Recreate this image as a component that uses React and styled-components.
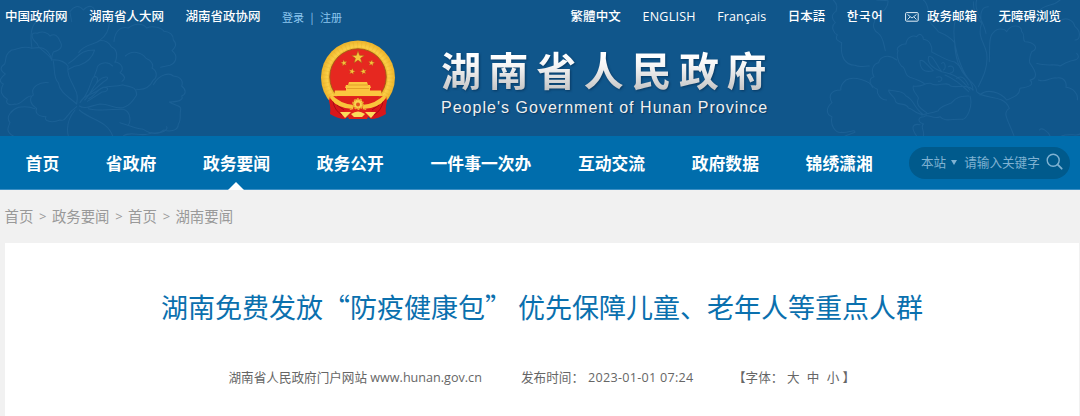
import React from "react";
import styled, { createGlobalStyle } from "styled-components";

const GlobalStyle = createGlobalStyle`
  * {
    box-sizing: border-box;
  }
  body {
    margin: 0;
    background: #f1f1f1;
    font-family: "Open Sans", "Noto Sans CJK SC", sans-serif;
  }
`;

const Page = styled.div`
  width: 1080px;
  height: 416px;
  overflow: hidden;
  display: flex;
  flex-direction: column;
`;

const Header = styled.header`
  position: relative;
  height: 136px;
  background: #10568b;
  color: #fff;
`;

const Flowers = styled.svg`
  position: absolute;
  top: 0;
  left: 0;
  fill: none;
  stroke: #1b6095;
  stroke-width: 3.2;
  stroke-linecap: round;
  stroke-linejoin: round;
`;

const TopBar = styled.div`
  position: relative;
  display: flex;
  justify-content: space-between;
  height: 34px;
  padding: 0 19px 0 5px;
`;

const LinkGroup = styled.div`
  display: flex;
  align-items: center;
  gap: 21.5px;
`;

const TopLink = styled.a`
  font-family: "Open Sans", "Noto Sans CJK ${(props) => props.$region || "SC"}", sans-serif;
  font-size: 12.5px;
  font-weight: ${(props) => props.$weight || 500};
  line-height: 34px;
  letter-spacing: ${(props) => props.$spacing || 0}px;
  white-space: nowrap;
`;

const MailLink = styled(TopLink)`
  display: flex;
  align-items: center;
  gap: 8px;
`;

const Login = styled.span`
  display: flex;
  gap: 6.5px;
  font-family: "Noto Sans CJK SC", sans-serif;
  font-size: 11px;
  line-height: 33px;
  color: #8cc6ef;
`;

const Brand = styled.div`
  position: relative;
  display: flex;
  padding: 6px 0 0 320px;
`;

const BrandText = styled.div`
  display: flex;
  flex-direction: column;
  margin: 3px 0 0 45px;
`;

const SiteName = styled.h1`
  margin: 0;
  font-family: "Noto Sans CJK SC", sans-serif;
  font-size: 40px;
  font-weight: 700;
  line-height: 52px;
  letter-spacing: 7.6px;
  white-space: nowrap;
  color: transparent;
  background: linear-gradient(#fff 25%, #f4f4f4 45%, #c8c8c8 88%);
  background-clip: text;
  filter: drop-shadow(1px 1px 1px rgba(0, 30, 60, 0.5));
`;

const SiteNameEn = styled.span`
  margin-top: 4px;
  font-family: "Liberation Sans", sans-serif;
  font-size: 16px;
  line-height: 18px;
  letter-spacing: 1.02px;
  white-space: nowrap;
  color: #f0f0f0;
  text-shadow: 1px 1px 1px rgba(0, 30, 60, 0.5);
`;

const Nav = styled.nav`
  display: flex;
  align-items: center;
  justify-content: space-between;
  height: 54px;
  padding: 0 10px 0 25.6px;
  background: #006dac;
  border-bottom: 1px solid #3c8fc4;
`;

const NavList = styled.div`
  display: flex;
  gap: 46.7px;
`;

const NavItem = styled.a`
  position: relative;
  padding-top: 1px;
  font-family: "Noto Sans CJK SC", sans-serif;
  font-size: 16.8px;
  font-weight: 700;
  line-height: 52px;
  color: #fff;
  white-space: nowrap;

  &::after {
    content: "";
    display: ${(props) => (props.$active ? "block" : "none")};
    position: absolute;
    left: 50%;
    bottom: -1px;
    margin-left: -8px;
    border: 8px solid transparent;
    border-top: 0;
    border-bottom-color: #fff;
  }
`;

const Search = styled.div`
  display: flex;
  align-items: center;
  justify-content: space-between;
  width: 161px;
  height: 32px;
  padding: 0 7px 2px 12px;
  border-radius: 16px;
  background: #005a8c;
  font-family: "Noto Sans CJK SC", sans-serif;
  font-size: 12.6px;
  color: #7fb2d2;
  white-space: nowrap;
`;

const Caret = styled.i`
  display: inline-block;
  margin: 0 7px 2px 5px;
  border: 3px solid transparent;
  border-top: 5px solid #7fb2d2;
  border-bottom: 0;
`;

const Breadcrumb = styled.div`
  display: flex;
  align-items: center;
  gap: 5.8px;
  height: 53px;
  padding: 0 0 2px 4.5px;
  font-size: 14.4px;
  color: #999;

  & span {
    font-size: 13px;
    width: 7px;
  }
`;

const Article = styled.main`
  display: flex;
  flex-direction: column;
  flex: 1;
  margin: 0 1px 0 5px;
  background: #fff;
`;

const Title = styled.h2`
  margin: 42px 0 0 156px;
  font-family: "Noto Sans CJK SC", sans-serif;
  font-size: 27px;
  font-weight: 400;
  line-height: 44px;
  color: #0a70ae;
  white-space: nowrap;
`;

const Meta = styled.div`
  display: flex;
  margin: 39px 0 0 223.5px;
  font-size: 12.6px;
  line-height: 20px;
  color: #666;
  white-space: pre;
`;

const MetaItem = styled.span`
  width: ${(props) => props.$width}px;
  letter-spacing: ${(props) => props.$spacing || 0}px;
`;

const FontSizes = styled.span`
  display: flex;
  gap: 7.2px;

  & span:first-child {
    margin-right: -3.5px;
  }
  & span:last-child {
    margin-left: -4px;
  }
`;

const languages = [
  { text: "繁體中文", region: "TC", spacing: 0.15 },
  { text: "ENGLISH", spacing: 0.25, weight: 400 },
  { text: "Français", spacing: 0.1, weight: 400 },
  { text: "日本語", region: "JP" },
  { text: "한국어", region: "KR", spacing: 0.7 },
];

const navItems = [
  "首页",
  "省政府",
  "政务要闻",
  "政务公开",
  "一件事一次办",
  "互动交流",
  "政府数据",
  "锦绣潇湘",
];

const STAR =
  "M0-10 2.4-3.2 9.5-3.1 3.8 1.2 5.9 8.1 0 4-5.9 8.1-3.8 1.2-9.5-3.1-2.4-3.2Z";

const FlowerPattern = () => (
  <Flowers width="1080" height="136" viewBox="0 0 3240 408">
    <path d="M155 180C145 140 120 140 95 145 70 135 50 150 35 150 12 165 20 178 14 192-5 205 5 215 16 222-6 240 0 248 10 252-4 275 8 290 22 298 14 310 30 318 45 312 60 318 75 290 92 288" />
    <path d="M155 178C140 155 115 148 112 132 90 112 92 95 112 100 128 92 145 98 150 108 165 98 175 110 180 124 190 140 182 150 160 156 155 165 155 170 155 180" />
    <path d="M155 180C180 178 195 186 204 198 200 225 215 245 226 270 235 285 232 300 230 312M160 184C165 210 160 235 175 248 178 275 205 290 230 312" />
    <path d="M206 190C235 175 235 150 284 150 275 180 255 190 238 196 220 198 212 205 206 208M236 158C255 130 285 135 298 122 315 120 328 130 334 140 355 150 352 170 345 188" />
    <path d="M96 145C92 120 90 80 110 65M342 125C345 90 365 78 385 84 405 68 430 70 440 84 460 75 485 84 492 94 515 96 520 108 520 120 535 135 522 145 516 152 538 170 525 190 510 196L482 202" />
    <path d="M345 185C365 190 374 205 360 218 378 228 376 238 366 244M376 168C395 150 425 155 438 175 455 182 462 195 456 204 475 215 470 235 460 240 448 265 430 270 410 268" />
    <path d="M240 308C255 280 280 285 296 270 310 255 345 262 368 254 390 262 410 258 410 285 398 305 385 318 372 322 350 330 330 312 300 312 275 316 255 330 238 318" />
    <path d="M460 254C480 220 510 218 520 228 545 230 550 246 545 258 560 270 558 284 545 288 552 302 532 305 508 306 525 318 545 315 542 330 538 345 545 360 535 372 535 395 505 395 492 390 470 408 445 398 430 388 400 385 375 372 360 368" />
    <path d="M230 320C195 345 200 365 180 360 150 372 130 360 138 350 110 350 105 335 110 325 85 310 90 290 100 285 90 260 120 245 145 248" />
    <path d="M225 330C205 355 198 380 205 408M238 330C270 360 320 360 338 408M265 326C300 335 350 326 370 328 395 335 392 370 384 376M40 408C15 395 25 380 30 368 15 350 35 330 55 322 75 318 90 320 105 326" />
    <path d="M246 300C265 280 270 255 278 235 285 225 298 230 290 248M254 300C275 280 280 250 305 235 325 225 330 235 310 246L270 280M266 296C285 288 290 270 310 262 330 260 325 275 306 276L262 304M290 210C290 190 320 180 338 198M290 210 282 230M210 35C220 20 235 12 250 30 270 10 288 20 284 45M210 38 215 65M298 122C315 110 328 90 328 65" />
    <path d="M370 408C390 390 430 415 455 398 490 402 505 388 500 380" />

    <g transform="translate(2280 0)">
      <path d="M220 0C235 15 230 25 228 34 210 45 218 60 226 68 210 80 222 100 232 105 222 120 240 125 245 128 240 170 255 195 285 196 300 204 320 196 328 198" />
      <path d="M350 0 384 2C386 20 375 25 374 30 350 38 340 55 344 64 335 80 345 95 355 100 370 110 370 130 376 152" />
      <path d="M380 300C360 300 350 280 352 268 325 255 325 235 342 230 330 210 342 190 356 188 360 170 385 160 410 180M424 198C410 180 410 160 414 152 405 145 425 130 438 132 440 110 460 105 470 110 480 95 490 108 490 118" />
      <path d="M424 198C440 202 430 225 450 232 475 240 485 245 495 252M490 118C510 120 518 140 515 156 535 165 555 180 584 186 605 200 610 218 622 232 635 250 640 260 638 270" />
      <path d="M490 0C510 15 500 40 512 50 500 65 520 75 535 95 560 105 575 115 584 128 585 175 600 210 620 232M586 60C575 100 585 170 622 235 640 250 650 260 650 272" />
      <path d="M640 5C640 30 650 55 665 70 650 110 675 130 680 160 685 200 670 230 655 260M650 0C640 30 670 60 678 100M685 20C660 20 660 50 665 70" />
      <path d="M688 185C690 150 685 110 700 98 710 82 735 85 740 95 755 70 785 75 785 95 798 105 785 118 795 125 820 125 840 145 815 155 808 172 808 185 810 190 825 210 838 235 810 240 825 255 805 262 780 265 778 290 755 292 740 300 720 275 680 265 660 285" />
      <path d="M650 275C670 300 730 280 748 325 725 340 745 360 762 408M630 288C640 320 620 360 605 358 580 355 555 368 540 350 520 360 505 340 492 350 475 350 470 365 490 372" />
      <path d="M626 288C600 290 590 290 575 308 550 320 540 320 535 332 515 340 500 340 485 345M640 270C620 250 590 265 572 258 560 240 530 265 512 250 490 248 490 262 460 258 455 275 475 285 475 295 465 320 490 330 500 338" />
      <path d="M500 345C465 345 460 325 445 324 440 305 405 320 405 298 398 285 385 280 386 270 420 275 430 275 438 288 465 300 460 325 492 345" />
      <path d="M338 262C330 240 280 228 258 240 235 260 245 270 242 270 210 270 205 290 216 308 195 325 200 345 216 350 210 375 225 400 245 397 265 400 285 385 285 397L255 408M470 408C450 380 460 370 480 374M490 372C480 380 495 395 490 408" />
      <path d="M480 182C490 175 505 200 520 212 490 220 480 205 480 182M506 170C520 165 525 190 545 215 520 205 500 190 506 170M545 190C555 180 560 205 550 210M565 200C580 192 590 215 570 220M530 232C550 225 550 245 535 244M545 215C580 222 600 230 630 270M555 225C580 235 600 250 626 275M590 235C605 225 615 235 625 255" />
      <path d="M830 190C860 200 890 190 900 198 925 182 930 185 935 182 955 180 960 170 950 160M835 240C860 250 870 230 890 234 915 230 920 250 918 262 940 265 955 280 952 300M840 30C860 10 880 20 900 0M900 62C920 50 940 60 945 80 965 95 960 120 945 120M838 390C845 380 865 395 870 408M905 408C925 398 950 410 960 402" />
    </g>
  </Flowers>
);

const Emblem = () => (
  <svg width="76" height="80" viewBox="0 0 76 80">
    <defs>
      <radialGradient id="gold" cx="50%" cy="50%" r="50%">
        <stop offset="74%" stopColor="#e9a51d" />
        <stop offset="83%" stopColor="#fbd048" />
        <stop offset="100%" stopColor="#edb229" />
      </radialGradient>
    </defs>
    <circle cx="38" cy="37.5" r="37" fill="url(#gold)" />
    <circle cx="38" cy="37.5" r="32.5" fill="none" stroke="#d99a1c" strokeWidth="6" strokeDasharray="1 3" opacity="0.2" />
    <circle cx="38" cy="37" r="28.2" fill="#e62820" stroke="#9c5a16" strokeWidth="0.9" />
    <g fill="#f7c53c" stroke="#a94d14" strokeWidth="0.8">
      <path d={STAR} transform="translate(38 17.5) scale(.68)" />
      <path d={STAR} transform="translate(24 23) rotate(-10) scale(.34)" />
      <path d={STAR} transform="translate(51.5 23) rotate(10) scale(.34)" />
      <path d={STAR} transform="translate(32 31.5) rotate(12) scale(.34)" />
      <path d={STAR} transform="translate(43.5 31.5) rotate(-12) scale(.34)" />
    </g>
    <g fill="#fbc63f">
      <path d="M29 42h18l1 3h2l1 3H25l1-3h2zM26 48h24v3H26zM15 50.5h46l1 5.5H14z" />
      <path d="M28 45h20M27 48.5h22" stroke="#d9901f" strokeWidth="0.7" />
    </g>
    <path d="M11 56Q38 57 65 56L56 69H20Z" fill="#df211c" />
    <path d="M10 56Q14 67 27 67L34 73 25 79Q18 79 10 74 11 69 9 61ZM66 56Q62 67 49 67L42 73 51 79Q58 79 66 74 65 69 67 61Z" fill="#d8161a" />
    <path d="M13 61Q14 70 22 75M63 61Q62 70 54 75M17 65 24 70M59 65 52 70" stroke="#a50d14" fill="none" strokeWidth="1" />
    <path d="M11 54Q20 64 34 65L33 69Q18 69 10 58ZM65 54Q56 64 42 65L43 69Q58 69 66 58Z" fill="#f9c43b" />
    <path d="M25 71 34 69H42L51 71 47 79H29Z" fill="#de201b" />
    <circle cx="38" cy="64" r="4.8" fill="#fbd451" stroke="#e9ab2c" strokeWidth="2.2" strokeDasharray="1.8 1.2" />
    <circle cx="38" cy="64.5" r="2" fill="#e4521f" />
    <path d="M20 72 31 72 25 78ZM56 72 45 72 51 78ZM31 74Q38 69 45 74L42 77H34Z" fill="#fbdc5c" />
  </svg>
);

const MailIcon = () => (
  <svg width="14" height="10" viewBox="0 0 14 10" fill="none" stroke="#e4f0f8">
    <rect x="0.6" y="0.6" width="12.6" height="8.6" rx="1" />
    <path d="M2.5 2.5 7 6 11.5 2.5M2.5 7.5 5 5M11.5 7.5 9 5" strokeWidth="0.9" />
  </svg>
);

const SearchIcon = () => (
  <svg width="17" height="17" viewBox="0 0 17 17" fill="none" stroke="#7fb2d2">
    <circle cx="7.2" cy="7.2" r="6" strokeWidth="1.4" />
    <path d="M11.7 11.7 15.7 15.7" strokeWidth="1.8" strokeLinecap="round" />
  </svg>
);

const App = () => {
  return (
    <Page>
      <GlobalStyle />
      <Header>
        <FlowerPattern />
        <TopBar>
          <LinkGroup>
            <TopLink>中国政府网</TopLink>
            <TopLink>湖南省人大网</TopLink>
            <TopLink>湖南省政协网</TopLink>
            <Login>
              <span>登录</span>
              <span>|</span>
              <span>注册</span>
            </Login>
          </LinkGroup>
          <LinkGroup>
            {languages.map(({ text, region, spacing, weight }) => (
              <TopLink key={text} $region={region} $spacing={spacing} $weight={weight}>
                {text}
              </TopLink>
            ))}
            <MailLink>
              <MailIcon />
              政务邮箱
            </MailLink>
            <TopLink>无障碍浏览</TopLink>
          </LinkGroup>
        </TopBar>
        <Brand>
          <Emblem />
          <BrandText>
            <SiteName>湖南省人民政府</SiteName>
            <SiteNameEn>People's Government of Hunan Province</SiteNameEn>
          </BrandText>
        </Brand>
      </Header>
      <Nav>
        <NavList>
          {navItems.map((item) => (
            <NavItem key={item} $active={item === "政务要闻"}>
              {item}
            </NavItem>
          ))}
        </NavList>
        <Search>
          <span>
            本站
            <Caret />
            请输入关键字
          </span>
          <SearchIcon />
        </Search>
      </Nav>
      <Breadcrumb>
        首页<span>&gt;</span>政务要闻<span>&gt;</span>首页<span>&gt;</span>湖南要闻
      </Breadcrumb>
      <Article>
        <Title>湖南免费发放“防疫健康包” 优先保障儿童、老年人等重点人群</Title>
        <Meta>
          <MetaItem $width={292.5}>湖南省人民政府门户网站 www.hunan.gov.cn</MetaItem>
          <MetaItem $width={67}>发布时间：</MetaItem>
          <MetaItem $width={145} $spacing={0.28}>2023-01-01 07:24</MetaItem>
          <FontSizes>
            <span>【字体：</span>
            <span>大</span>
            <span>中</span>
            <span>小</span>
            <span>】</span>
          </FontSizes>
        </Meta>
      </Article>
    </Page>
  );
};

export default App;
